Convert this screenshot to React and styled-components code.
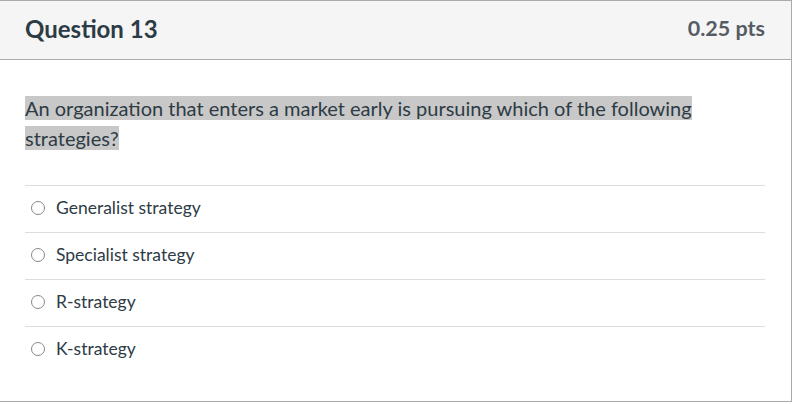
import React from "react";
import styled, { createGlobalStyle } from "styled-components";

const Global = createGlobalStyle`
  html, body { margin: 0; padding: 0; background: #fff; }
  body { font-family: Lato, "Noto Sans", sans-serif; color: #2d3b45; }
`;

const Card = styled.div`
  box-sizing: border-box;
  width: 793px;
  height: 402px;
  margin-left: -1px;
  border: 1px solid #aaaaaa;
  display: flex;
  flex-direction: column;
`;

const Header = styled.div`
  box-sizing: border-box;
  height: 59px;
  background: #f5f5f5;
  border-bottom: 1px solid #aaaaaa;
  display: flex;
  align-items: center;
  justify-content: space-between;
  padding: 0 26px 4px 25px;
`;

const Title = styled.h2`
  margin: 0;
  font-size: 24px;
  font-weight: 700;
  color: #2d3b45;
`;

const Points = styled.div`
  font-size: 21.5px;
  font-weight: 700;
  color: #555c63;
`;

const Body = styled.div`
  padding: 33px 26px 0 25px;
`;

const QuestionText = styled.p`
  margin: 0;
  font-size: 20px;
  line-height: 30px;
  width: 690px;
  span { background: #c8c8c8; }
`;

const Answers = styled.div`
  margin-top: 32px;
`;

const Answer = styled.label`
  box-sizing: border-box;
  display: flex;
  align-items: center;
  gap: 11px;
  height: 47px;
  border-top: 1px solid #dddddd;
  padding: 0 0 4px 6px;
  font-size: 17.5px;
  color: #2d3b45;
`;

const Radio = styled.span`
  box-sizing: border-box;
  width: 14px;
  height: 14px;
  margin-top: 2px;
  border-radius: 50%;
  border: 1.5px solid #888888;
  background: #fff;
  flex: none;
`;

const answers = ["Generalist strategy", "Specialist strategy", "R-strategy", "K-strategy"];

export default function App() {
  return (
    <>
      <Global />
      <Card>
        <Header>
          <Title>Question 13</Title>
          <Points>0.25 pts</Points>
        </Header>
        <Body>
          <QuestionText>
            <span>An organization that enters a market early is pursuing which of the following strategies?</span>
          </QuestionText>
          <Answers>
            {answers.map((a) => (
              <Answer key={a}>
                <Radio />
                {a}
              </Answer>
            ))}
          </Answers>
        </Body>
      </Card>
    </>
  );
}
